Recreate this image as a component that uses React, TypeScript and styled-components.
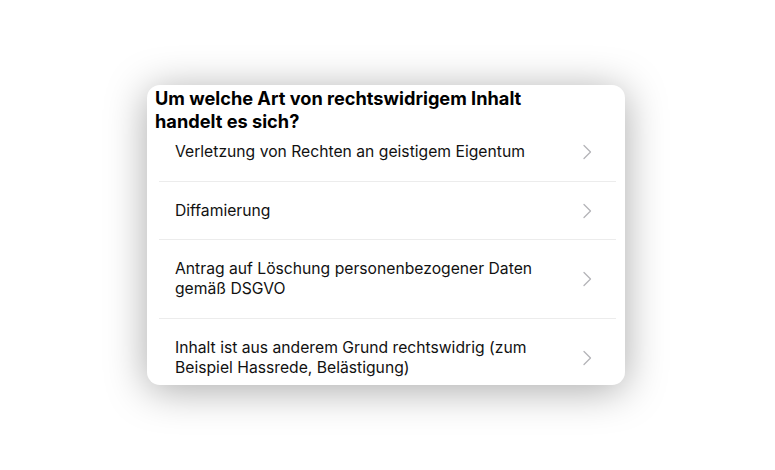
import React from "react";
import styled, { createGlobalStyle } from "styled-components";

const GlobalStyle = createGlobalStyle`
  html, body {
    margin: 0;
    padding: 0;
    background: #ffffff;
  }
  body {
    font-family: Inter, "Noto Sans", "Liberation Sans", sans-serif;
    -webkit-font-smoothing: antialiased;
  }
`;

const Page = styled.div`
  width: 100vw;
  height: 100vh;
  display: flex;
  align-items: center;
  justify-content: center;
`;

const Sheet = styled.section`
  width: 478px;
  height: 300px;
  margin-left: -3px;
  background: #ffffff;
  border-radius: 13px;
  box-shadow: 0 5px 40px rgba(0, 0, 0, 0.34);
  overflow: hidden;
  display: flex;
  flex-direction: column;
`;

const Title = styled.h1`
  margin: 0;
  padding: 2px 90px 0 8px;
  font-size: 18.2px;
  line-height: 23px;
  font-weight: 700;
  color: #000000;
`;

const List = styled.ul`
  list-style: none;
  margin: 0;
  padding: 0 9px 0 12px;
`;

const Row = styled.li`
  display: flex;
  align-items: center;
  gap: 16px;
  padding: 18.75px 24px 18.75px 16px;
  border-bottom: 1px solid #ececec;
  &:first-child {
    padding-top: 9px;
  }
`;

const Label = styled.span`
  flex: 1;
  font-size: 15.7px;
  line-height: 20px;
  color: #111111;
`;

const Chevron = () => (
  <svg width="10" height="16" viewBox="0 0 10 16" fill="none">
    <path
      d="M2 1.5 L8.5 8 L2 14.5"
      stroke="#b4b4b8"
      strokeWidth="1.3"
      strokeLinecap="round"
      strokeLinejoin="round"
    />
  </svg>
);

const reasons = [
  "Verletzung von Rechten an geistigem Eigentum",
  "Diffamierung",
  "Antrag auf Löschung personenbezogener Daten gemäß DSGVO",
  "Inhalt ist aus anderem Grund rechtswidrig (zum Beispiel Hassrede, Belästigung)",
];

export default function App() {
  return (
    <>
      <GlobalStyle />
      <Page>
        <Sheet>
          <Title>Um welche Art von rechtswidrigem Inhalt handelt es sich?</Title>
          <List>
            {reasons.map((r) => (
              <Row key={r}>
                <Label>{r}</Label>
                <Chevron />
              </Row>
            ))}
          </List>
        </Sheet>
      </Page>
    </>
  );
}
